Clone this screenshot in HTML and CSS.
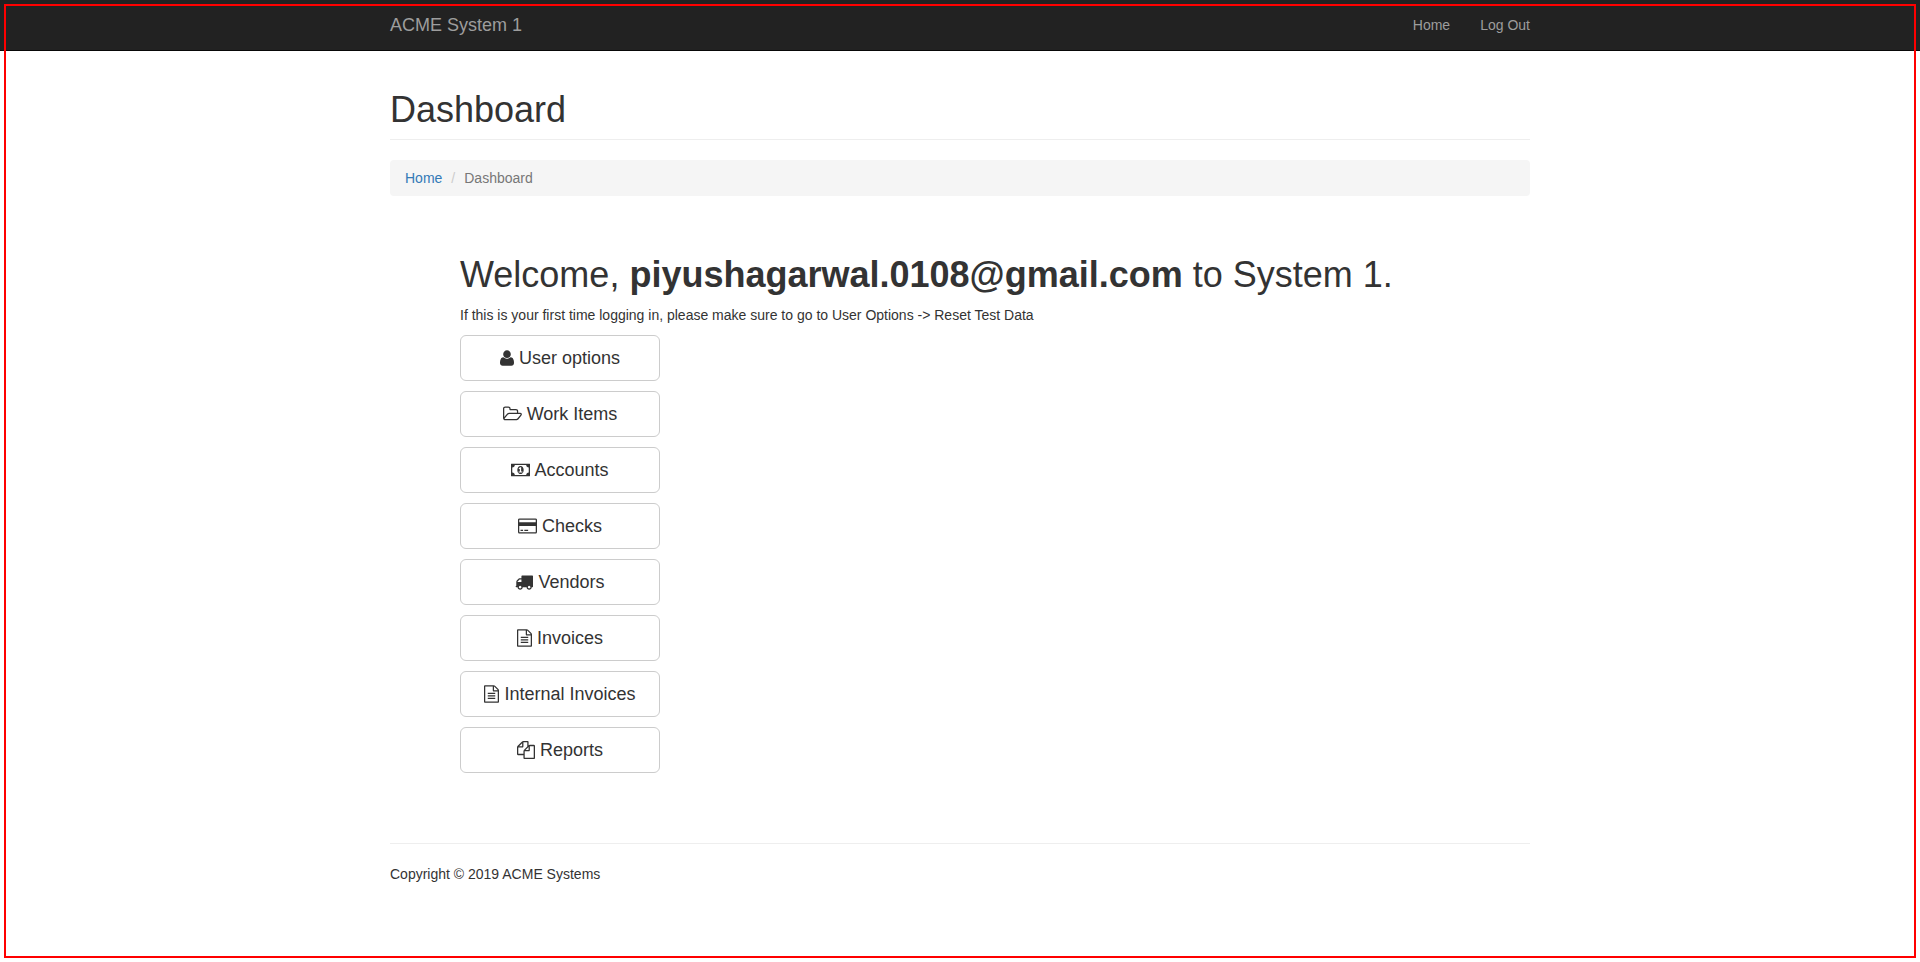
FILE: index.html
```html
<!DOCTYPE html>
<html lang="en">
<head>
<meta charset="utf-8">
<meta name="viewport" content="width=device-width, initial-scale=1">
<title>ACME System 1 - Dashboard</title>
<link rel="stylesheet" href="styles.css">
</head>
<body>
<header class="navbar">
  <nav class="container navbar-inner">
    <a class="navbar-brand" href="#">ACME System 1</a>
    <ul class="navbar-nav">
      <li><a href="#">Home</a></li>
      <li><a href="#">Log Out</a></li>
    </ul>
  </nav>
</header>

<main class="container">
  <h1 class="page-header">Dashboard</h1>
  <ol class="breadcrumb">
    <li><a href="#">Home</a></li>
    <li class="active">Dashboard</li>
  </ol>

  <section class="welcome">
    <h1>Welcome, <strong>piyushagarwal.0108@gmail.com</strong> to System 1.</h1>
    <p>If this is your first time logging in, please make sure to go to User Options -&gt; Reset Test Data</p>
    <div class="menu">
      <button type="button" class="btn"><svg class="icon icon-narrow" viewBox="192 0 1408 1792" aria-hidden="true"><path d="M1600 1405q0 120-73 189.500t-194 69.500h-874q-121 0-194-69.500t-73-189.500q0-53 3.500-103.500t14-109 26.500-108.500 43-97.500 62-81 85.500-53.500 111.500-20q9 0 42 21.500t74.500 48 108 48 133.500 21.500 133.500-21.500 108-48 74.500-48 42-21.500q61 0 111.500 20t85.500 53.500 62 81 43 97.500 26.500 108.500 14 109 3.500 103.500zm-320-893q0 159-112.500 271.500t-271.500 112.500-271.500-112.500-112.500-271.500 112.500-271.500 271.500-112.500 271.500 112.500 112.500 271.500z"/></svg> User options</button>
      <button type="button" class="btn"><svg class="icon icon-wide" viewBox="64 0 1920 1792" aria-hidden="true"><path d="M1845 931q0-35-53-35h-1088q-40 0-85.500 21.500t-71.500 52.500l-294 363q-18 24-18 40 0 35 53 35h1088q40 0 86-22t71-53l294-363q18-22 18-39zm-1141-163h768v-160q0-40-28-68t-68-28h-576q-40 0-68-28t-28-68v-64q0-40-28-68t-68-28h-320q-40 0-68 28t-28 68v853l256-315q44-53 116-87.500t140-34.500zm1269 163q0 62-46 120l-295 363q-43 53-116 87.500t-140 34.500h-1088q-92 0-158-66t-66-158v-960q0-92 66-158t158-66h320q92 0 158 66t66 158v32h544q92 0 158 66t66 158v160h192q54 0 99 24.500t67 70.500q15 32 15 68z"/></svg> Work Items</button>
      <button type="button" class="btn"><svg class="icon icon-wide" viewBox="0 0 1920 1792" aria-hidden="true"><path d="M768 1152h384v-96h-128v-448h-114l-148 137 77 80q42-37 55-57h2v288h-128v96zm512-256q0 70-21 142t-59.500 134-101.500 101-138 39-138-39-101.500-101-59.500-134-21-142 21-142 59.500-134 101.500-101 138-39 138 39 101.500 101 59.500 134 21 142zm512 256v-512q-106 0-181-75t-75-181h-1152q0 106-75 181t-181 75v512q106 0 181 75t75 181h1152q0-106 75-181t181-75zm128-832v1152q0 26-19 45t-45 19h-1792q-26 0-45-19t-19-45v-1152q0-26 19-45t45-19h1792q26 0 45 19t19 45z"/></svg> Accounts</button>
      <button type="button" class="btn"><svg class="icon icon-wide" viewBox="0 0 1920 1792" aria-hidden="true"><path d="M1760 128q66 0 113 47t47 113v1216q0 66-47 113t-113 47h-1600q-66 0-113-47t-47-113v-1216q0-66 47-113t113-47h1600zm-1600 128q-13 0-22.500 9.500t-9.500 22.500v224h1664v-224q0-13-9.500-22.500t-22.500-9.500h-1600zm1600 1280q13 0 22.500-9.500t9.500-22.500v-608h-1664v608q0 13 9.500 22.500t22.500 9.500h1600zm-1504-128v-128h256v128h-256zm384 0v-128h384v128h-384z"/></svg> Checks</button>
      <button type="button" class="btn"><svg class="icon" viewBox="0 0 1792 1792" aria-hidden="true"><path d="M640 1408q0-52-38-90t-90-38-90 38-38 90 38 90 90 38 90-38 38-90zm-384-512h384v-256h-158q-13 0-22 9l-195 195q-9 9-9 22v30zm1280 512q0-52-38-90t-90-38-90 38-38 90 38 90 90 38 90-38 38-90zm256-1088v1024q0 15-4 26.500t-13.500 18.500-16.500 11.500-23.500 6-22.500 2-25.500 0-22.500-.500q0 106-75 181t-181 75-181-75-75-181h-384q0 106-75 181t-181 75-181-75-75-181h-64q-3 0-22.500.500t-25.500 0-22.500-2-23.500-6-16.500-11.500-13.500-18.500-4-26.500q0-26 19-45t45-19v-320q0-8-.500-35t0-38 2.500-34.500 6.500-37 14-30.500 22.500-30l198-198q19-19 50.500-32t58.500-13h160v-192q0-26 19-45t45-19h1024q26 0 45 19t19 45z"/></svg> Vendors</button>
      <button type="button" class="btn"><svg class="icon icon-file" viewBox="128 0 1536 1792" aria-hidden="true"><path d="M1596 380q28 28 48 76t20 88v1152q0 40-28 68t-68 28h-1344q-40 0-68-28t-28-68v-1600q0-40 28-68t68-28h896q40 0 88 20t76 48zm-444-244v376h376q-10-29-22-41l-313-313q-12-12-41-22zm384 1528v-1024h-416q-40 0-68-28t-28-68v-416h-768v1536h1280zm-1024-864q0-14 9-23t23-9h704q14 0 23 9t9 23v64q0 14-9 23t-23 9h-704q-14 0-23-9t-9-23v-64zm736 224q14 0 23 9t9 23v64q0 14-9 23t-23 9h-704q-14 0-23-9t-9-23v-64q0-14 9-23t23-9h704zm0 256q14 0 23 9t9 23v64q0 14-9 23t-23 9h-704q-14 0-23-9t-9-23v-64q0-14 9-23t23-9h704z"/></svg> Invoices</button>
      <button type="button" class="btn"><svg class="icon icon-file" viewBox="128 0 1536 1792" aria-hidden="true"><path d="M1596 380q28 28 48 76t20 88v1152q0 40-28 68t-68 28h-1344q-40 0-68-28t-28-68v-1600q0-40 28-68t68-28h896q40 0 88 20t76 48zm-444-244v376h376q-10-29-22-41l-313-313q-12-12-41-22zm384 1528v-1024h-416q-40 0-68-28t-28-68v-416h-768v1536h1280zm-1024-864q0-14 9-23t23-9h704q14 0 23 9t9 23v64q0 14-9 23t-23 9h-704q-14 0-23-9t-9-23v-64zm736 224q14 0 23 9t9 23v64q0 14-9 23t-23 9h-704q-14 0-23-9t-9-23v-64q0-14 9-23t23-9h704zm0 256q14 0 23 9t9 23v64q0 14-9 23t-23 9h-704q-14 0-23-9t-9-23v-64q0-14 9-23t23-9h704z"/></svg> Internal Invoices</button>
      <button type="button" class="btn"><svg class="icon" viewBox="0 0 1792 1792" aria-hidden="true"><path d="M1696 384q40 0 68 28t28 68v1216q0 40-28 68t-68 28h-960q-40 0-68-28t-28-68v-288h-544q-40 0-68-28t-28-68v-672q0-40 20-88t48-76l408-408q28-28 76-48t88-20h416q40 0 68 28t28 68v328q68-40 128-40h416zm-544 213l-299 299h299v-299zm-640-384l-299 299h299v-299zm196 647l316-316v-416h-384v416q0 40-28 68t-68 28h-416v640h512v-256q0-40 20-88t48-76zm956 804v-1152h-384v416q0 40-28 68t-68 28h-416v640h896z"/></svg> Reports</button>
    </div>
  </section>

  <footer class="footer">Copyright © 2019 ACME Systems</footer>
</main>
<div class="frame" aria-hidden="true"></div>
</body>
</html>
```

FILE: styles.css
```css
* {
  box-sizing: border-box;
}

body {
  margin: 0;
  background: #fff;
  color: #333;
  font-family: "Liberation Sans", Arial, sans-serif;
  font-size: 14px;
  line-height: 20px;
}

a {
  color: #337ab7;
  text-decoration: none;
}

h1 {
  margin: 0;
  font-size: 36px;
  font-weight: 400;
  line-height: 40px;
}

p {
  margin: 0;
}

.container {
  width: 100%;
  max-width: 1170px;
  margin: 0 auto;
  padding: 0 15px;
}

.navbar {
  background: #222;
  border-bottom: 1px solid #080808;
}

.navbar-inner {
  display: flex;
  justify-content: space-between;
  align-items: center;
  min-height: 50px;
}

.navbar a {
  color: #9d9d9d;
}

.navbar-brand {
  font-size: 18px;
}

.navbar-nav {
  display: flex;
  gap: 30px;
  margin: 0;
  padding: 0;
  list-style: none;
}

.page-header {
  margin: 39px 0 20px;
  padding-bottom: 9px;
  border-bottom: 1px solid #eee;
}

.breadcrumb {
  display: flex;
  margin: 0;
  padding: 8px 15px;
  background: #f5f5f5;
  border-radius: 4px;
  list-style: none;
}

.breadcrumb .active {
  color: #777;
}

.breadcrumb .active::before {
  padding: 0 9px;
  color: #ccc;
  content: "/";
}

.welcome {
  display: flex;
  flex-direction: column;
  gap: 10px;
  padding: 59px 70px 70px;
}

.menu {
  display: flex;
  flex-direction: column;
  align-items: flex-start;
  gap: 10px;
}

.btn {
  width: 200px;
  padding: 10px 16px;
  background: #fff;
  border: 1px solid #ccc;
  border-radius: 6px;
  color: #333;
  font-family: inherit;
  font-size: 18px;
  line-height: 24px;
  text-align: center;
  cursor: pointer;
}

.icon {
  width: 18px;
  height: 18px;
  fill: currentColor;
  vertical-align: -3px;
}

.icon-narrow {
  width: 14px;
}

.icon-file {
  width: 15px;
}

.icon-wide {
  width: 19px;
}

.footer {
  padding: 20px 0;
  border-top: 1px solid #eee;
}

/* Highlight outline drawn over the whole window */
.frame {
  position: fixed;
  inset: 4px;
  border: 2px solid #f00;
  pointer-events: none;
}
```
